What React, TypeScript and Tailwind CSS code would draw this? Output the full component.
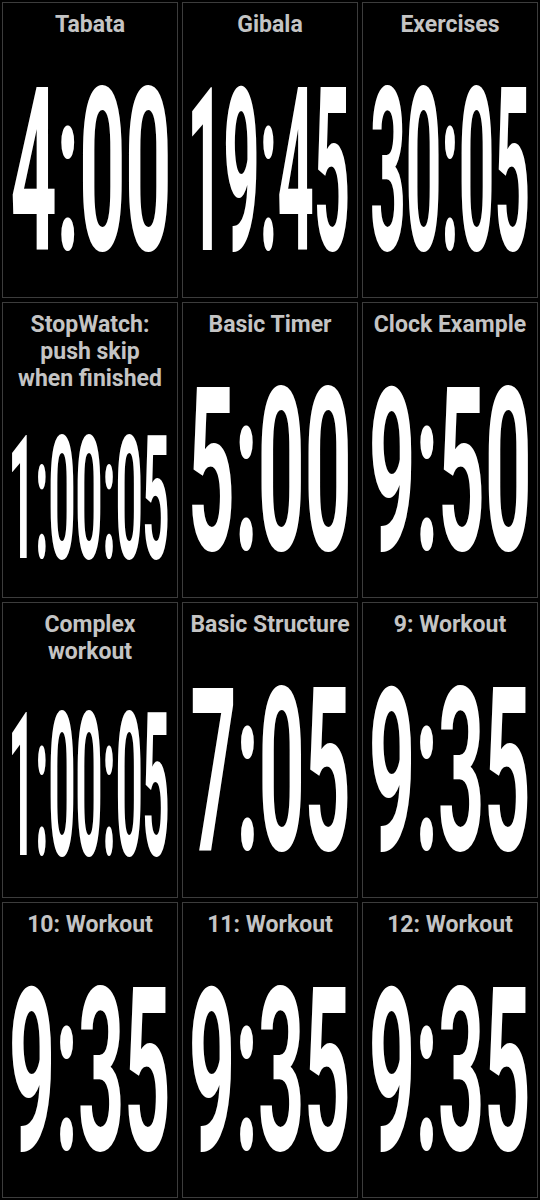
import React, { useLayoutEffect, useRef, useState } from 'react';

type Timer = { title: string; time: string; lines: 1 | 2 | 3 };

const TIMERS: Timer[] = [
  { title: 'Tabata', time: '4:00', lines: 1 },
  { title: 'Gibala', time: '19:45', lines: 1 },
  { title: 'Exercises', time: '30:05', lines: 1 },
  { title: 'StopWatch:\npush skip\nwhen finished', time: '1:00:05', lines: 3 },
  { title: 'Basic Timer', time: '5:00', lines: 1 },
  { title: 'Clock Example', time: '9:50', lines: 1 },
  { title: 'Complex\nworkout', time: '1:00:05', lines: 2 },
  { title: 'Basic Structure', time: '7:05', lines: 1 },
  { title: '9: Workout', time: '9:35', lines: 1 },
  { title: '10: Workout', time: '9:35', lines: 1 },
  { title: '11: Workout', time: '9:35', lines: 1 },
  { title: '12: Workout', time: '9:35', lines: 1 },
];

// number box size depends on how much room the title takes
const BOX: Record<number, { cls: string; w: number; h: number }> = {
  1: { cls: 'mt-[45px] h-[169px]', w: 156, h: 169 },
  2: { cls: 'mt-[43px] h-[149px]', w: 156, h: 149 },
  3: { cls: 'mt-[40px] h-[128px]', w: 156, h: 128 },
};

// Stretches the digits so their ink fills the box exactly
const FitTime: React.FC<{ text: string; lines: number }> = ({ text, lines }) => {
  const box = BOX[lines];
  const baseRef = useRef<HTMLSpanElement>(null);
  const [tf, setTf] = useState<string | undefined>(undefined);

  useLayoutEffect(() => {
    const base = baseRef.current;
    if (!base) return;
    const ctx = document.createElement('canvas').getContext('2d');
    if (!ctx) return;
    ctx.font = '700 100px Roboto';
    const m = ctx.measureText(text);
    const inkW = m.actualBoundingBoxLeft + m.actualBoundingBoxRight;
    const inkH = m.actualBoundingBoxAscent + m.actualBoundingBoxDescent;
    const baseline = base.offsetTop;
    const sx = box.w / inkW;
    const sy = box.h / inkH;
    const tx = sx * m.actualBoundingBoxLeft;
    const ty = -sy * (baseline - m.actualBoundingBoxAscent);
    setTf(`translate(${tx}px, ${ty}px) scale(${sx}, ${sy})`);
  }, [text, box.w, box.h]);

  return (
    <div className={`relative w-[156px] shrink-0 ${box.cls}`}>
      <span
        className="absolute left-0 top-0 origin-top-left whitespace-nowrap font-['Roboto',sans-serif] text-[100px] leading-none font-bold text-white"
        style={{ transform: tf }}
      >
        {text}
        <span ref={baseRef} className="inline-block h-0 w-0 align-baseline" />
      </span>
    </div>
  );
};

const TimerCell: React.FC<{ timer: Timer }> = ({ timer }) => (
  <div className="h-[300px] w-[180px] p-0.5">
    <div className="flex h-full w-full flex-col items-center border border-[#3c3c3c] bg-black">
      <h2 className="whitespace-pre-line pt-[8px] text-center font-['Roboto',sans-serif] text-[23px] leading-[27px] font-bold whitespace-nowrap text-[#c4c4c4]">
        {timer.title}
      </h2>
      <FitTime text={timer.time} lines={timer.lines} />
    </div>
  </div>
);

const App: React.FC = () => {
  return (
    <div className="grid h-[1200px] w-[540px] grid-cols-3 bg-black">
      {TIMERS.map((t, i) => (
        <TimerCell key={i} timer={t} />
      ))}
    </div>
  );
};

export default App;
